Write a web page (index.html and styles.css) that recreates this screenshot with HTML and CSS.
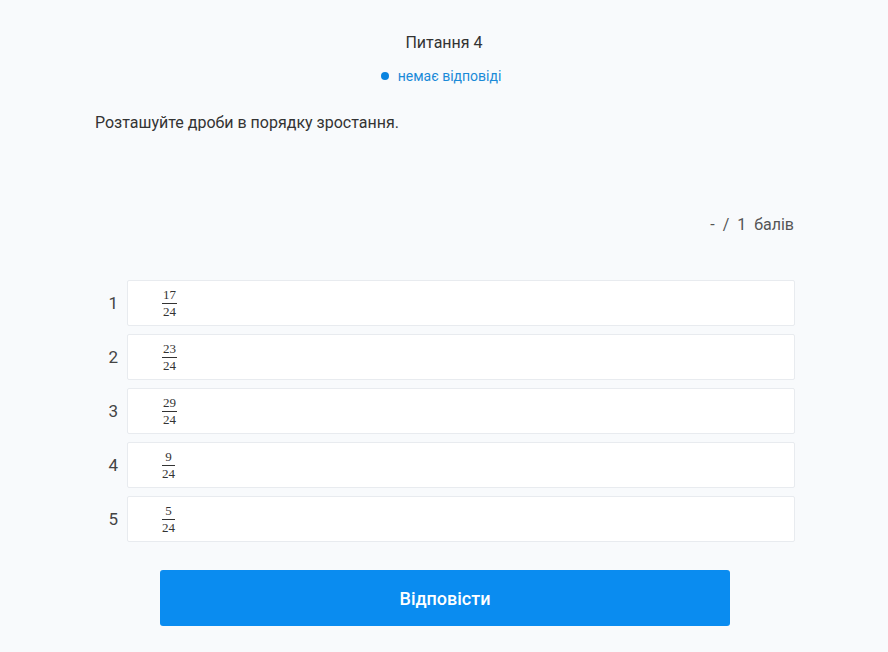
FILE: index.html
```html
<!DOCTYPE html>
<html lang="uk">
<head>
  <meta charset="UTF-8">
  <meta name="viewport" content="width=device-width, initial-scale=1.0">
  <title>Питання 4</title>
  <link rel="stylesheet" href="styles.css">
</head>
<body>

  <div class="container">
    <!-- заголовок питання -->
    <div class="question-header">
      <h2>Питання 4</h2>
      <div class="status"><span class="dot"></span>немає відповіді</div>
    </div>

    <p class="question-text">Розташуйте дроби в порядку зростання.</p>

    <div class="score">-&nbsp; /&nbsp; 1&nbsp; балів</div>

    <!-- список для впорядкування -->
    <div class="order-list">
      <div class="order-row">
        <span class="order-num">1</span>
        <div class="order-item"><span class="frac"><span class="num">17</span><span class="den">24</span></span></div>
      </div>
      <div class="order-row">
        <span class="order-num">2</span>
        <div class="order-item"><span class="frac"><span class="num">23</span><span class="den">24</span></span></div>
      </div>
      <div class="order-row">
        <span class="order-num">3</span>
        <div class="order-item"><span class="frac"><span class="num">29</span><span class="den">24</span></span></div>
      </div>
      <div class="order-row">
        <span class="order-num">4</span>
        <div class="order-item"><span class="frac"><span class="num">9</span><span class="den">24</span></span></div>
      </div>
      <div class="order-row">
        <span class="order-num">5</span>
        <div class="order-item"><span class="frac"><span class="num">5</span><span class="den">24</span></span></div>
      </div>
    </div>

    <div class="actions">
      <button class="answer-btn">Відповісти</button>
    </div>
  </div>

</body>
</html>
```

FILE: styles.css
```css
body {
  font-family: Roboto, "Liberation Sans", sans-serif;
  background-color: #f8fafc;
  color: #333;
  margin: 0;
  padding: 0;
}

.container {
  width: 700px;
  margin: 0 auto;
  padding-top: 34px;
}

/* заголовок */
.question-header {
  text-align: center;
}

h2 {
  font-size: 16px;
  font-weight: normal;
  color: #333;
  margin: 0;
  line-height: 18px;
}

.status {
  margin-top: 16px;
  padding-right: 6px;
  font-size: 14px;
  line-height: 16px;
  color: #1a8ad8;
}

.dot {
  display: inline-block;
  width: 8px;
  height: 8px;
  border-radius: 50%;
  background-color: #0a84e0;
  margin-right: 9px;
  vertical-align: 1px;
}

.question-text {
  font-size: 16px;
  line-height: 18px;
  margin: 30px 0 0 1px;
  color: #333;
}

.score {
  text-align: right;
  font-size: 16px;
  line-height: 18px;
  color: #555;
  margin-top: 84px;
}

/* список */
.order-list {
  margin: 46px -1px 0 0;
  display: flex;
  flex-direction: column;
  gap: 8px;
}

.order-row {
  display: flex;
  align-items: center;
}

.order-num {
  width: 24px;
  padding-right: 9px;
  text-align: right;
  font-size: 17px;
  color: #444;
}

.order-item {
  flex: 1;
  height: 44px;
  background-color: #fff;
  border: 1px solid #e8ebef;
  border-radius: 2px;
  display: flex;
  align-items: center;
  padding-left: 33px;
}

.frac {
  display: inline-flex;
  flex-direction: column;
  align-items: center;
  font-family: "Liberation Serif", "DejaVu Serif", serif;
  font-size: 13px;
  line-height: 14px;
  color: #333;
  padding: 0 1px;
}

.num {
  border-bottom: 1px solid #333;
  padding: 0 1px 1px;
  align-self: stretch;
  text-align: center;
}

.den {
  padding-top: 1px;
}

.actions {
  display: flex;
  justify-content: center;
  margin-top: 28px;
  padding-left: 2px;
}

.answer-btn {
  width: 570px;
  height: 56px;
  background-color: #0a8cf0;
  color: white;
  border: none;
  border-radius: 3px;
  font-family: Roboto, "Liberation Sans", sans-serif;
  font-size: 18px;
  font-weight: 500;
  cursor: pointer;
}
```
